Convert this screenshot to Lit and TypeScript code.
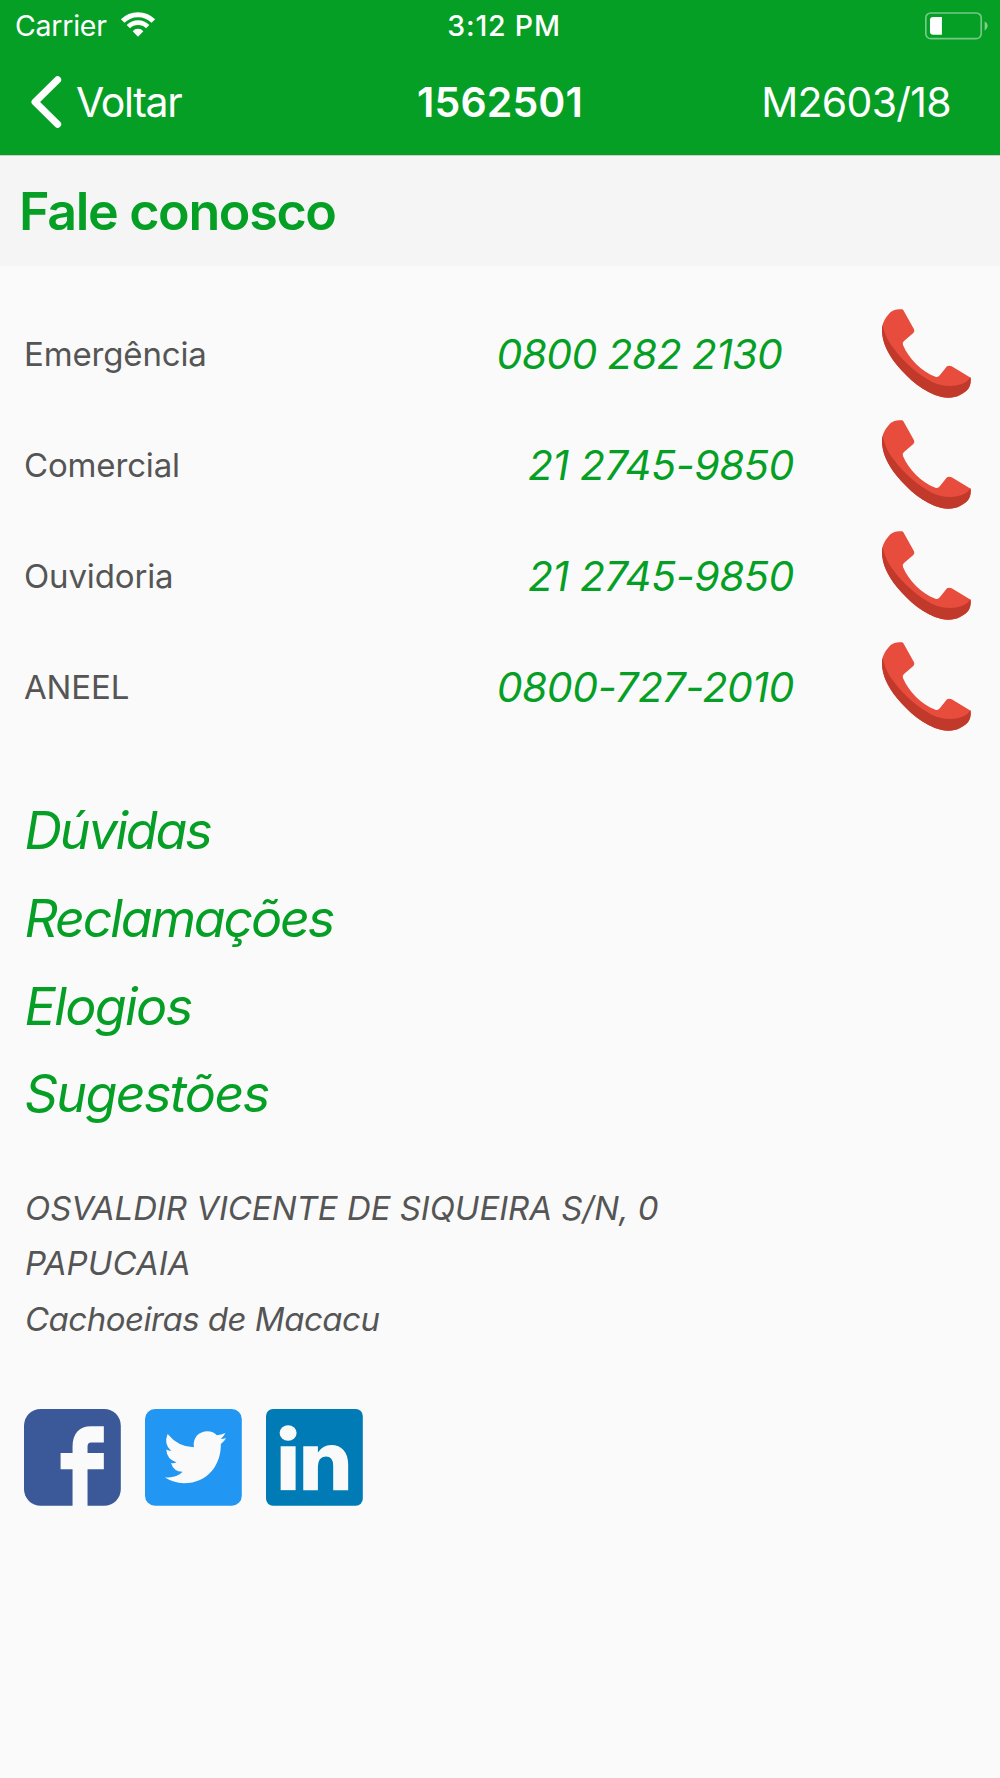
import { LitElement, html, css, svg } from 'lit';
import { customElement, property } from 'lit/decorators.js';

interface Contact {
  id: string;
  label: string;
  phone: string;
}

const CONTACTS: Contact[] = [
  { id: 'emergencia', label: 'Emergência', phone: '0800 282 2130 ' },
  { id: 'comercial', label: 'Comercial', phone: '21 2745-9850' },
  { id: 'ouvidoria', label: 'Ouvidoria', phone: '21 2745-9850' },
  { id: 'aneel', label: 'ANEEL', phone: '0800-727-2010' },
];

const LINKS = [
  { id: 'duvidas', text: 'Dúvidas' },
  { id: 'reclamacoes', text: 'Reclamações' },
  { id: 'elogios', text: 'Elogios' },
  { id: 'sugestoes', text: 'Sugestões' },
];

const ADDRESS = [
  { id: 'street', text: 'OSVALDIR VICENTE DE SIQUEIRA S/N, 0' },
  { id: 'district', text: 'PAPUCAIA' },
  { id: 'city', text: 'Cachoeiras de Macacu' },
];

const ICONS = {
  wifi: {
    box: '363 35 102 75',
    body: svg`
      <path d="M368 62A65 65 0 0 1 460 62" fill="none" stroke="#fff" stroke-width="15" />
      <path d="M385 79A41 41 0 0 1 443 79" fill="none" stroke="#fff" stroke-width="14" />
      <path d="M398 92.5A22 22 0 0 1 430 92.5L414 109Z" fill="#fff" />`,
  },
  battery: {
    box: '555 30 190 85',
    body: svg`
      <rect x="557.5" y="33" width="167" height="78" rx="15" fill="none" stroke="#fff" stroke-opacity=".45" stroke-width="5" />
      <path d="M606 45V99H580Q570 99 570 89V55Q570 45 580 45Z" fill="#fff" />
      <path d="M735 58Q744 63 744 72T735 87Z" fill="#fff" fill-opacity=".5" />`,
  },
  back: {
    box: '90 228 95 156',
    body: svg`<path d="M172 239.500L105 306L172 372.500" fill="none" stroke="#fff" stroke-width="21" stroke-linecap="round" stroke-linejoin="round" />`,
  },
  phone: {
    box: '66 57 267 267',
    body: svg`
      <path fill="#e74c3c" d="M125 58C113 56 100 59 92 66C77 82 66 98 66 120C66 158 84 192 110 224C145 266 190 307 245 321C262 325 285 324 300 315C325 302 334 290 332 263L275 229Q267 225 261 229L240 255Q234 263 226 260C185 245 145 205 129 165Q126 158 132 153L160 129Q165 124 162 118L131 62Q129 58 125 58Z" />
      <path fill="#c0392b" d="M68 104C66 112 66 116 66 120C66 158 84 192 110 224C145 266 190 307 245 321C262 325 285 324 300 315C325 302 334 290 332 262Q324 274 312 279C285 292 250 291 215 275C175 254 130 216 100 174C86 155 74 135 68 104Z" />`,
  },
  facebook: {
    box: '72 59 291 291',
    body: svg`
      <rect x="72" y="59" width="291" height="291" rx="50" fill="#3b5998" />
      <path fill="#fafafa" d="M218 351V240H182V191H218V172C218 133 238 111 274 111H312V160H274Q263 160 263 172V191H312V240H263V351Z" />`,
  },
  twitter: {
    box: '435 59 291 291',
    body: svg`
      <rect x="435" y="59" width="291" height="291" rx="30" fill="#2196f3" />
      <path fill="#fafafa" d="M494 264C515 267 536 261 548 248Q521 247 513 221Q521 223 530 220Q500 210 499 181Q506 185 514 185Q490 165 503 134Q535 173 582 174C578 145 597 126 623 126Q640 126 651 138Q664 136 677 131Q671 141 663 149Q671 149 679 146Q672 158 663 164C664 225 625 282 552 282Q520 281 494 264Z" />`,
  },
  linkedin: {
    box: '797 59 291 291',
    body: svg`
      <rect x="797" y="59" width="291" height="291" rx="21" fill="#007bb6" />
      <g fill="#fafafa">
        <ellipse cx="863.500" cy="131" rx="25.500" ry="23.500" />
        <rect x="841" y="171" width="45" height="132" />
        <path d="M909 171H953V190Q967 167 993 167C1025 167 1044 190 1044 224V303H999V230Q999 202 977 202Q953 204 953 232V303H909Z" />
      </g>`,
  },
};

@customElement('app-icon')
export class AppIcon extends LitElement {
  @property() public name: keyof typeof ICONS = 'phone';

  protected override render() {
    const icon = ICONS[this.name];
    return html`<svg viewBox=${icon.box} preserveAspectRatio="none">${icon.body}</svg>`;
  }

  static override styles = css`
    :host {
      display: block;
      flex: none;
    }
    svg {
      display: block;
      width: 100%;
      height: 100%;
      overflow: visible;
    }
  `;
}

@customElement('app-root')
export class AppRoot extends LitElement {
  protected override render() {
    return html`
      <header>
        <div class="status">
          <div class="carrier">
            <span>Carrier</span>
            <app-icon class="wifi" name="wifi"></app-icon>
          </div>
          <span class="clock">3:12 PM</span>
          <app-icon class="battery" name="battery"></app-icon>
        </div>
        <nav>
          <div class="back">
            <app-icon class="chevron" name="back"></app-icon>
            <span class="voltar">Voltar</span>
          </div>
          <span class="title">1562501</span>
          <span class="meter">M2603/18</span>
        </nav>
      </header>
      <h1><span>Fale conosco</span></h1>
      <main>
        <section class="contacts">
          ${CONTACTS.map(
            (c) => html`
              <div class="contact ${c.id}">
                <span class="label">${c.label}</span>
                <a class="number">${c.phone}</a>
                <app-icon class="phone" name="phone"></app-icon>
              </div>
            `,
          )}
        </section>
        <section class="links">
          ${LINKS.map((l) => html`<a class="link ${l.id}">${l.text}</a>`)}
        </section>
        <address>
          ${ADDRESS.map((a) => html`<span class=${a.id}>${a.text}</span>`)}
        </address>
        <section class="social">
          <app-icon name="facebook"></app-icon>
          <app-icon name="twitter"></app-icon>
          <app-icon name="linkedin"></app-icon>
        </section>
      </main>
    `;
  }

  static override styles = css`
    :host {
      display: block;
      box-sizing: border-box;
      height: 1778px;
      overflow: hidden;
      background: #fafafa;
      color: #555;
      font-family: Inter, 'Liberation Sans', sans-serif;
      white-space: nowrap;
    }
    header {
      height: 155px;
      background: #069f25;
      color: #fff;
    }
    .status,
    nav {
      display: grid;
      grid-template-columns: 1fr auto 1fr;
      align-items: center;
    }
    .status {
      height: 51px;
      padding: 0 12px 0 15px;
      font-size: 28.5px;
    }
    .carrier {
      display: flex;
      align-items: center;
      gap: 14px;
      letter-spacing: -0.25px;
    }
    .wifi {
      width: 34px;
      height: 25px;
      margin-top: -2px;
    }
    .clock {
      padding-left: 5px;
      font-weight: 500;
      letter-spacing: 0.8px;
    }
    .battery {
      width: 63px;
      height: 28px;
      justify-self: end;
    }
    nav {
      height: 101px;
      padding: 0 30px;
      font-size: 41px;
    }
    .back {
      display: flex;
      align-items: center;
      gap: 14px;
    }
    .chevron {
      width: 32px;
      height: 52px;
    }
    .voltar {
      letter-spacing: -1.35px;
    }
    .title {
      font-weight: 600;
      letter-spacing: 0.1px;
    }
    .meter {
      justify-self: end;
      margin-right: 19px;
      letter-spacing: -0.7px;
    }
    h1 {
      display: flex;
      align-items: center;
      box-sizing: border-box;
      height: 111px;
      margin: 0;
      padding: 1px 0 0 19px;
      border-top: 1px solid #cdcdcd;
      background: #f5f5f5;
      color: #069f25;
      font-size: 52px;
      font-weight: 600;
      letter-spacing: -1.35px;
    }
    main {
      padding: 32px 24px 0;
    }
    .contact {
      display: grid;
      grid-template-columns: 1fr auto 89px;
      column-gap: 88px;
      align-items: center;
      height: 111.1px;
      padding-right: 5px;
      font-size: 33px;
    }
    .label {
      letter-spacing: -0.15px;
    }
    .number,
    .link {
      color: #069f25;
      font-style: italic;
    }
    .number {
      padding-top: 1px;
      font-size: 41px;
      letter-spacing: -0.4px;
      white-space: pre;
    }
    .emergencia .number {
      margin-right: 1px;
      letter-spacing: -0.65px;
    }
    .aneel .number {
      letter-spacing: -0.45px;
    }
    .phone {
      width: 89px;
      height: 89px;
    }
    .links {
      display: flex;
      flex-direction: column;
      margin: 45px 0 0 0.5px;
    }
    .link {
      height: 87.7px;
      font-size: 52px;
      line-height: 87.7px;
      letter-spacing: -1.6px;
    }
    .duvidas,
    .reclamacoes {
      letter-spacing: -2.2px;
    }
    address {
      display: flex;
      flex-direction: column;
      margin: 42.4px 0 0 1px;
      font-size: 33px;
      line-height: 55.6px;
    }
    .street {
      letter-spacing: -0.03px;
    }
    .district {
      letter-spacing: 0.1px;
    }
    .city {
      letter-spacing: -0.5px;
    }
    .social {
      display: flex;
      gap: 24px;
      margin-top: 62px;
    }
    .social app-icon {
      width: 96.8px;
      height: 96.8px;
    }
  `;
}
